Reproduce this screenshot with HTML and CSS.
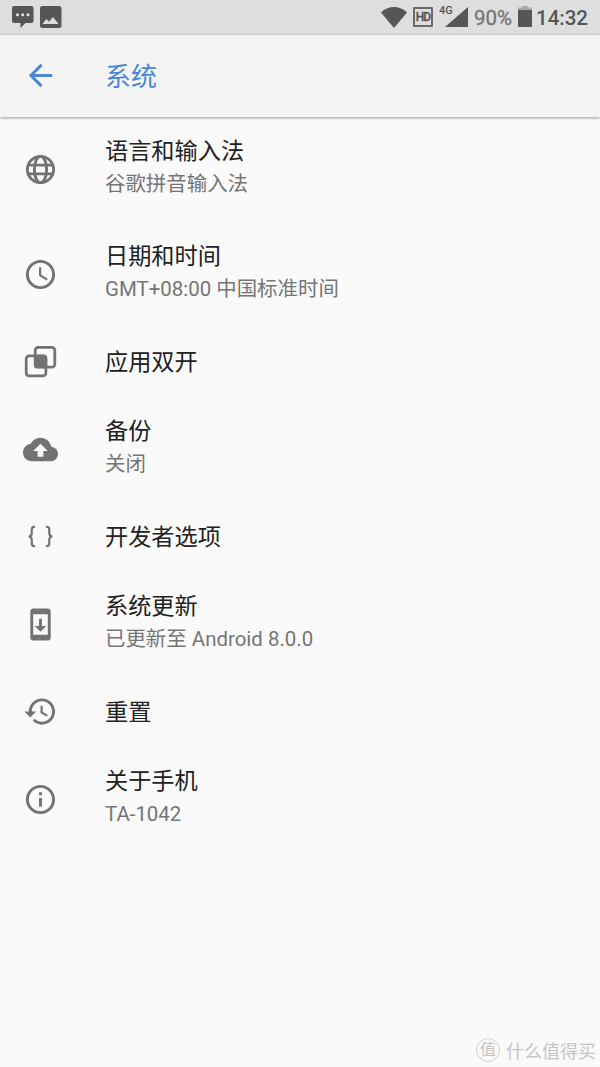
FILE: index.html
```html
<!DOCTYPE html>
<html lang="zh-CN">
<head>
<meta charset="utf-8">
<title>系统</title>
<link rel="stylesheet" href="styles.css">
</head>
<body>
<div class="screen">
  <header class="status">
    <svg class="status-left" width="52" height="26" viewBox="0 0 52 26" fill="#565656">
      <path d="M2 0h17.500a2 2 0 0 1 2 2v13a2 2 0 0 1-2 2h-6L8.500 22v-5H2a2 2 0 0 1-2-2V2a2 2 0 0 1 2-2z"/>
      <g fill="#e4e4e4"><circle cx="5.500" cy="8.700" r="1.500"/><circle cx="10.700" cy="8.700" r="1.500"/><circle cx="16" cy="8.700" r="1.500"/></g>
      <path fill-rule="evenodd" d="M30.500 0h16.500a2.500 2.500 0 0 1 2.500 2.500v17a2.500 2.500 0 0 1-2.500 2.500h-16.500a2.500 2.500 0 0 1-2.500-2.500v-17A2.500 2.500 0 0 1 30.500 0zM30.500 18h16l-5.500-7-4 4.800-2.600-2.800z"/>
    </svg>
    <div class="status-right">
      <svg class="wifi" width="26" height="21" viewBox="0 0 26 21"><path fill="#565656" d="M13 21 0 5.500Q5.500 0 13 0t13 5.500z"/></svg>
      <span class="hd">HD</span>
      <span class="signal"><span class="net">4G</span><svg width="23" height="20" viewBox="0 0 23 20"><path fill="#565656" d="M23 0v20H0z"/></svg></span>
      <span class="percent">90%</span>
      <svg class="battery" width="14" height="21" viewBox="0 0 14 21"><path fill="#a9a9a9" d="M4 0h6v1.500h4V5H0V1.500h4z"/><path fill="#565656" d="M0 4h14v16a1 1 0 0 1-1 1H1a1 1 0 0 1-1-1z"/></svg>
      <span class="time">14:32</span>
    </div>
  </header>
  <nav class="bar">
    <svg class="back" viewBox="0 0 24 24"><path d="M20 11H7.830l5.590-5.590L12 4l-8 8 8 8 1.410-1.410L7.830 13H20v-2z"/></svg>
    <h1>系统</h1>
  </nav>
  <main class="list">
    <div class="row tall">
      <svg class="icon" viewBox="0 0 24 24"><g fill="none" stroke="#737373" stroke-width="2"><circle cx="12" cy="12" r="9"/><ellipse cx="12" cy="12" rx="4.200" ry="9"/><path d="M3.500 9h17M3.500 15h17"/></g></svg>
      <div class="text"><div class="title">语言和输入法</div><div class="sub">谷歌拼音输入法</div></div>
    </div>
    <div class="row tall">
      <svg class="icon" viewBox="0 0 24 24"><path d="M11.990 2C6.470 2 2 6.480 2 12s4.470 10 9.990 10C17.520 22 22 17.520 22 12S17.520 2 11.990 2zM12 20c-4.420 0-8-3.580-8-8s3.580-8 8-8 8 3.580 8 8-3.580 8-8 8zm.5-13H11v6l5.250 3.150.75-1.230-4.500-2.670z"/></svg>
      <div class="text"><div class="title">日期和时间</div><div class="sub">GMT+08:00 中国标准时间</div></div>
    </div>
    <div class="row">
      <svg class="icon" viewBox="0 0 24 24"><g fill="none" stroke="#737373" stroke-width="1.900"><rect x="8.400" y="2.300" width="13.400" height="13.500" rx="2"/><rect x="2.200" y="8.200" width="13.500" height="13.600" rx="2"/></g><rect x="7.500" y="7.300" width="9.100" height="9.400" rx="2"/></svg>
      <div class="text"><div class="title">应用双开</div></div>
    </div>
    <div class="row tall">
      <svg class="icon" viewBox="0 0 24 24"><path d="M19.350 10.040C18.670 6.590 15.640 4 12 4 9.110 4 6.600 5.640 5.350 8.040 2.340 8.360 0 10.910 0 14c0 3.310 2.690 6 6 6h13c2.760 0 5-2.240 5-5 0-2.640-2.050-4.780-4.650-4.960zM14 13v4h-4v-4H7l5-5 5 5h-3z"/></svg>
      <div class="text"><div class="title">备份</div><div class="sub">关闭</div></div>
    </div>
    <div class="row">
      <svg class="icon" viewBox="0 0 24 24"><path fill="none" stroke="#737373" stroke-width="1.500" d="M8.300 5.300H7.800Q6 5.300 6 7.300v2.300Q6 12 3.800 12 6 12 6 14.400v2.300q0 2 1.800 2h.5M15.700 5.300h.5q1.800 0 1.800 2v2.300q0 2.400 2.200 2.400-2.200 0-2.200 2.400v2.300q0 2-1.800 2h-.5"/></svg>
      <div class="text"><div class="title">开发者选项</div></div>
    </div>
    <div class="row tall">
      <svg class="icon" viewBox="0 0 24 24"><path d="M17 1.010L7 1c-1.100 0-2 .9-2 2v18c0 1.100.9 2 2 2h10c1.100 0 2-.9 2-2V3c0-1.100-.9-1.990-2-1.990zM17 19H7V5h10v14zm-1-6h-3V8h-2v5H8l4 4 4-4z"/></svg>
      <div class="text"><div class="title">系统更新</div><div class="sub">已更新至 Android 8.0.0</div></div>
    </div>
    <div class="row">
      <svg class="icon" viewBox="0 0 24 24"><path d="M13 3c-4.970 0-9 4.030-9 9H1l3.890 3.890.07.14L9 12H6c0-3.870 3.130-7 7-7s7 3.130 7 7-3.130 7-7 7c-1.930 0-3.680-.79-4.940-2.060l-1.420 1.420C8.270 19.990 10.510 21 13 21c4.970 0 9-4.030 9-9s-4.030-9-9-9zm-1 5v5l4.280 2.540.72-1.210-3.500-2.080V8H12z"/></svg>
      <div class="text"><div class="title">重置</div></div>
    </div>
    <div class="row tall">
      <svg class="icon" viewBox="0 0 24 24"><path d="M11 17h2v-6h-2v6zm1-15C6.480 2 2 6.480 2 12s4.480 10 10 10 10-4.480 10-10S17.520 2 12 2zm0 18c-4.410 0-8-3.590-8-8s3.590-8 8-8 8 3.590 8 8-3.590 8-8 8zM11 9h2V7h-2v2z"/></svg>
      <div class="text"><div class="title">关于手机</div><div class="sub">TA-1042</div></div>
    </div>
  </main>
  <footer class="mark"><span class="seal">值</span><span>什么值得买</span></footer>
</div>
</body>
</html>
```
FILE: styles.css
```css
* { box-sizing: border-box; }
body { margin: 0; font-family: Roboto, "Noto Sans CJK SC", sans-serif; background: #fafafa; }
.screen { display: flex; flex-direction: column; width: 600px; height: 1067px; overflow: hidden; background: #fafafa; }
.status { display: flex; justify-content: space-between; height: 35px; padding: 6px 12px 0 12px; background: #dedede; color: #565656; flex: none; }
.status-right { display: flex; height: 22px; }
.wifi { margin: 1px 6px 0 0; }
.hd { width: 20px; height: 20px; margin: 1px 6px 0 0; border: 2px solid #6a6a6a; border-radius: 1px; font-size: 12px; font-weight: 500; line-height: 17px; display: flex; justify-content: center; letter-spacing: -.8px; -webkit-text-stroke: .3px #565656; }
.signal { position: relative; display: flex; align-items: flex-end; width: 29px; height: 21px; padding-left: 6px; margin-right: 6px; }
.net { position: absolute; left: 0; top: -2px; font-size: 11px; line-height: 13px; font-weight: 500; }
.percent { width: 38px; margin-right: 6px; font-size: 20.500px; line-height: 25px; color: #757575; white-space: nowrap; -webkit-text-stroke: .3px #757575; }
.battery { margin: 0 4px 0 0; }
.time { width: 52px; font-size: 20.500px; line-height: 25px; font-weight: 500; white-space: nowrap; }
.bar { display: flex; align-items: center; flex: none; height: 81.500px; padding-left: 23px; background: #f4f4f4; box-shadow: 0 1px 3px rgba(0,0,0,.4); }
.back { width: 35px; height: 35px; fill: #4a86d4; }
.bar h1 { margin: 2px 0 0 47px; font-size: 26px; line-height: 36px; font-weight: 400; color: #4a86d4; }
.list { flex: 1; }
.row { display: flex; align-items: center; height: 70px; padding-left: 23px; }
.row.tall { height: 105px; }
.icon { width: 35px; height: 35px; margin-right: 47px; fill: #737373; flex: none; }
.title { font-size: 23.200px; line-height: 33px; color: #212121; }
.sub { font-size: 20.450px; line-height: 33px; color: #757575; }
.text { margin-top: 1px; }
.tall .text { margin-top: -2px; }
.mark { display: flex; align-items: center; justify-content: flex-end; height: 34px; padding-right: 4px; gap: 6px; font-size: 18px; color: #c4c4c4; flex: none; }
.seal { width: 24px; height: 24px; border: 1px solid #cfcfcf; border-radius: 50%; font-size: 16px; line-height: 21px; text-align: center; }
```
